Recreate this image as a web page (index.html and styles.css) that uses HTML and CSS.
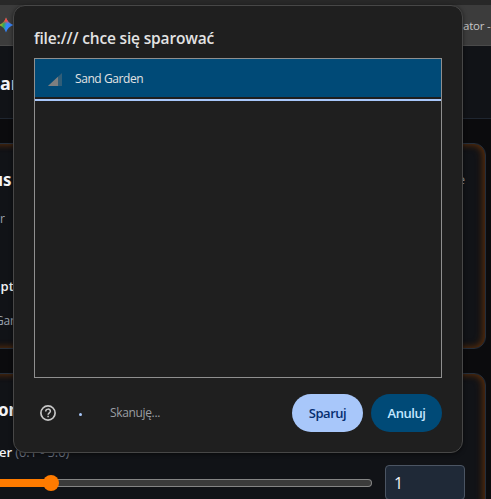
FILE: index.html
```html
<!DOCTYPE html>
<html lang="pl">
<head>
<meta charset="utf-8">
<title>Sand Garden</title>
<link rel="stylesheet" href="styles.css">
</head>
<body>
<div class="tabstrip"></div>
<div class="bookmarks">
  <svg class="spark" width="16" height="16" viewBox="0 0 16 16">
    <defs>
      <linearGradient id="spark" x1="0" y1="0.4" x2="1" y2="0.6"><stop offset="0" stop-color="#fbbc04"/><stop offset=".35" stop-color="#34a853"/><stop offset=".55" stop-color="#3186ff"/><stop offset="1" stop-color="#4285f4"/></linearGradient>
      <linearGradient id="sparkTop" x1="0" y1="0" x2="0" y2="1"><stop offset="0" stop-color="#ff4641"/><stop offset=".2" stop-color="#ff4641"/><stop offset=".42" stop-color="#ff4641" stop-opacity="0"/></linearGradient>
    </defs>
    <path fill="url(#spark)" d="M8 .5Q9.8 6.2 15.5 8Q9.8 9.8 8 15.5Q6.2 9.8 .5 8Q6.2 6.2 8 .5Z"/>
    <path fill="url(#sparkTop)" d="M8 .5Q9.8 6.2 15.5 8Q9.8 9.8 8 15.5Q6.2 9.8 .5 8Q6.2 6.2 8 .5Z"/>
  </svg>
  <span class="bookmark">ator -</span>
</div>
<header class="header"><span>ar</span></header>
<main class="content">
  <section class="card status">
    <div class="status-head"><h2>us</h2><span>e</span></div>
    <p class="muted">r</p>
    <p class="name">.pt</p>
    <p class="device">Gar</p>
  </section>
  <section class="card motion">
    <h2>on</h2>
    <p class="label">er <span>(0.1 - 5.0)</span></p>
    <div class="control">
      <div class="track"><div class="fill"></div><div class="thumb"></div></div>
      <div class="value">1</div>
    </div>
  </section>
</main>
<div class="dialog">
  <h1>file:/// chce się sparować</h1>
  <div class="list">
    <div class="row">
      <svg width="14" height="13" viewBox="0 0 14 13"><path d="M0 13L14 0V13Z" fill="#315e78"/><path d="M0 13L10 3.7V13Z" fill="#7d7f80"/></svg>
      <span>Sand Garden</span>
    </div>
  </div>
  <footer class="actions">
    <svg class="help" width="16" height="16" viewBox="0 0 16 16" fill="none" stroke="#c7c7c7"><circle cx="8" cy="8" r="7.1" stroke-width="1.7"/><path d="M5.7 6.4C5.7 3.4 10.4 3.4 10.4 6.2C10.4 7.8 8.1 7.9 8.1 9.8" stroke-width="1.5"/><path d="M8.1 10.7V12.2" stroke-width="1.5"/></svg>
    <i class="spinner"></i>
    <span class="scan">Skanuję...</span>
    <button class="pair">Sparuj</button>
    <button class="cancel">Anuluj</button>
  </footer>
</div>
</body>
</html>
```
FILE: styles.css
```css
* { box-sizing: border-box; }
body { margin: 0; width: 491px; height: 499px; overflow: hidden; position: relative; background: #0b0b0d; color: #f3f4f6; font-family: "Open Sans", "Noto Sans", sans-serif; }
h1, h2, p { margin: 0; }
.tabstrip { height: 5px; background: #282828; }
.bookmarks { height: 41px; background: #3c3c3c; border-bottom: 1px solid #4a4a4a; display: flex; justify-content: space-between; align-items: center; overflow: hidden; }
.spark { margin-left: -2px; flex: none; }
.bookmark { width: 28px; font-size: 11.5px; letter-spacing: -.2px; color: #c7c7c7; white-space: nowrap; }
.header { height: 73px; background: #111317; border-bottom: 1px solid #1f2630; font: 700 18px/74px "Noto Sans", sans-serif; }
.content { height: 380px; overflow: hidden; padding: 24px 5px 0 0; display: flex; flex-direction: column; gap: 24px; }
.card { margin-left: -24px; flex: none; background: #111317; border: 1px solid #252e3a; border-radius: 12px; box-shadow: inset -2px 0 9px -1px #5c2f0b, inset 0 0 6px #40220c; }
.card h2 { font: 700 17px/24px "Noto Sans", sans-serif; }
.status { height: 206px; padding: 24px 20px 0 23px; }
.status-head { display: flex; justify-content: space-between; font-size: 12px; line-height: 24px; color: #9ca3af; }
.status-head h2 { color: #f3f4f6; margin-left: -8px; }
.muted { margin-top: 18px; font-size: 12px; line-height: 18px; color: #9ca3af; }
.name { margin: 48px 0 0 -3px; font-size: 13px; line-height: 20px; font-weight: 600; }
.device { margin: 16px 0 0 -5px; font-size: 12px; line-height: 18px; letter-spacing: -.2px; color: #9ca3af; }
.motion { height: 206px; padding: 24px 20px 0 23px; }
.motion h2 { margin-left: -2px; }
.label { margin: 20px 0 0 -1px; font-size: 13px; line-height: 20px; font-weight: 600; letter-spacing: -.1px; }
.label span { color: #6b7280; font-weight: 400; }
.control { display: flex; justify-content: space-between; margin-top: 3px; align-items: center; }
.track { width: 372px; flex: none; height: 8px; border: 1px solid #858585; border-left: 0; border-radius: 0 4px 4px 0; background: #3b3b3b; display: flex; align-items: center; }
.fill { width: 44px; height: 8px; background: #ff7b00; }
.thumb { width: 16px; height: 16px; border-radius: 50%; background: #ff7b00; flex: none; margin-left: -1px; }
.value { width: 80px; height: 35px; background: #1f2937; border: 1px solid #4b5563; border-radius: 4px; padding-left: 8px; font-size: 16px; line-height: 34px; }
.dialog { position: absolute; left: 13px; top: 5px; width: 450px; height: 448px; border: 1px solid #474747; border-radius: 12px; background: #1f1f1f; padding: 20px 20px 0; display: flex; flex-direction: column; box-shadow: 0 1px 4px #0008; }
.dialog h1 { font-size: 15.5px; line-height: 24px; font-weight: 600; letter-spacing: -.16px; color: #e3e3e3; white-space: nowrap; }
.list { margin-top: 8px; width: 408px; height: 320px; border: 1px solid #8f8f8f; }
.row { height: 42px; background: linear-gradient(#004a77 38px, #1f1f1f 38px, #1f1f1f 40px, #a8c7fa 40px); padding: 0 14px 5px; display: flex; align-items: center; gap: 12px; font-size: 12px; letter-spacing: -.42px; color: #e3e3e3; }
.row svg { margin: 3px 0 0 -1px; }
.row span { margin: 1px 0 0 1px; }
.actions { height: 70px; display: flex; align-items: center; padding: 0 0 0 6px; }
.spinner { width: 3px; height: 3px; border-radius: 50%; background: #a8c7fa; margin: 2px 0 0 23px; }
.scan { font-size: 12px; letter-spacing: -.35px; color: #9a9ea2; margin: -1px 0 0 28px; flex: 1; }
button { height: 38px; border: 0; border-radius: 19px; padding: 0; font: 600 13px "Open Sans", sans-serif; letter-spacing: -.45px; }
.pair { width: 71px; background: #a8c7fa; color: #062e6f; }
.cancel { width: 71px; margin: 0 0 0 8px; background: #004a77; color: #c2e7ff; }
```
